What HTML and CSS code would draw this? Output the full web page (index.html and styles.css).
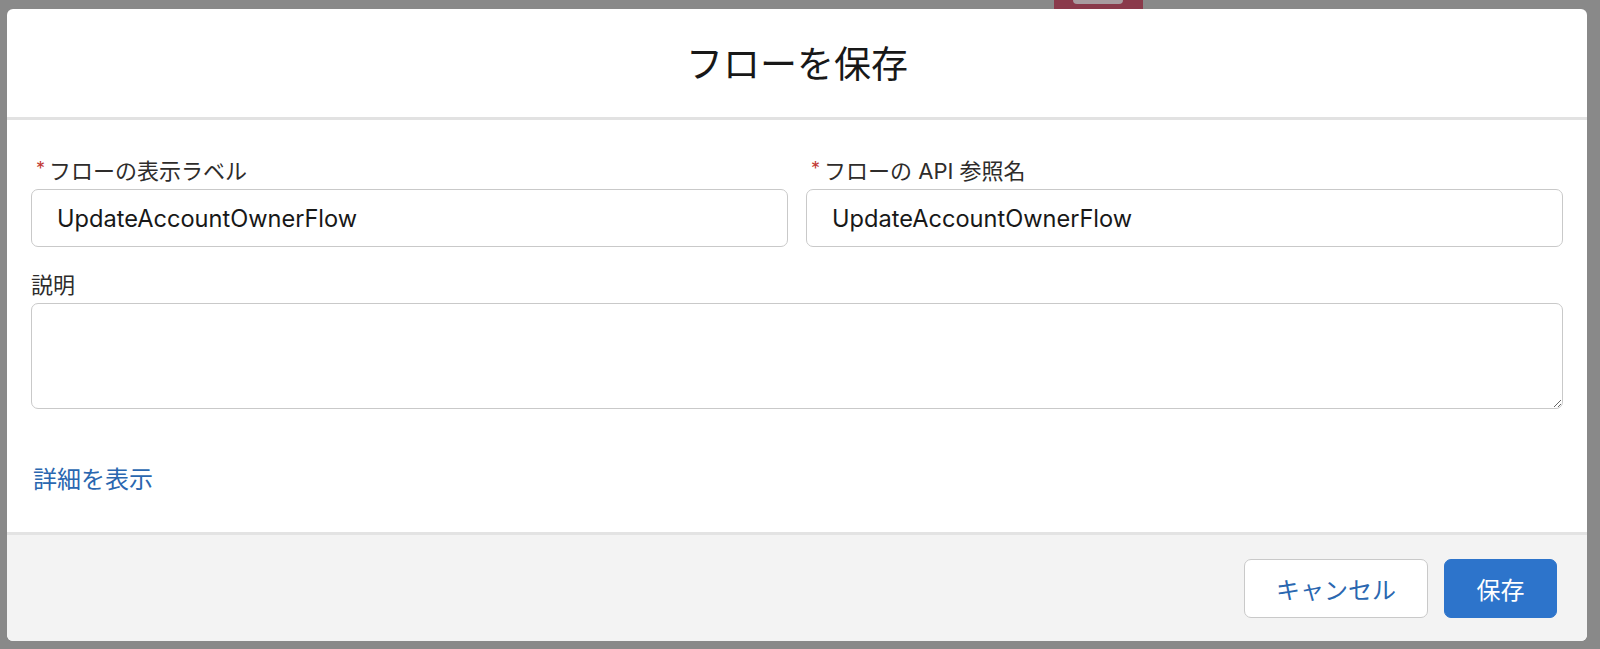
FILE: index.html
```html
<!DOCTYPE html>
<html lang="ja">
<head>
    <meta charset="UTF-8">
    <meta name="viewport" content="width=device-width, initial-scale=1.0">
    <title>フローを保存</title>
    <link rel="stylesheet" href="styles.css">
</head>
<body>
    <div class="backdrop-tab"><span></span></div>

    <div class="modal">
        <header class="modal-header">
            <h1 class="modal-title">フローを保存</h1>
        </header>

        <section class="modal-body">
            <div class="form-row">
                <div class="form-item">
                    <label class="form-label"><abbr class="required">*</abbr>フローの表示ラベル</label>
                    <input class="form-input" type="text" value="UpdateAccountOwnerFlow">
                </div>
                <div class="form-item">
                    <label class="form-label"><abbr class="required">*</abbr>フローの API 参照名</label>
                    <input class="form-input" type="text" value="UpdateAccountOwnerFlow">
                </div>
            </div>

            <div class="form-item">
                <label class="form-label">説明</label>
                <textarea class="form-textarea"></textarea>
            </div>

            <a class="details-link" href="#">詳細を表示</a>
        </section>

        <footer class="modal-footer">
            <button class="btn btn-neutral">キャンセル</button>
            <button class="btn btn-brand">保存</button>
        </footer>
    </div>
</body>
</html>
```

FILE: styles.css
```css
/* Reset and Base Styles */
* {
    margin: 0;
    padding: 0;
    box-sizing: border-box;
    font-family: 'Inter', 'Noto Sans CJK JP', sans-serif;
}

body {
    background-color: #898989;
    color: #181818;
    height: 649px;
    overflow: hidden;
    position: relative;
}

/* Something peeking out behind the overlay */
.backdrop-tab {
    position: absolute;
    top: 0;
    left: 1054px;
    width: 89px;
    height: 9px;
    background-color: #8a3a4b;
}

.backdrop-tab span {
    position: absolute;
    top: 0;
    left: 19px;
    width: 50px;
    height: 4px;
    background-color: #a89ca0;
    border-radius: 0 0 4px 4px;
}

/* Modal */
.modal {
    position: relative;
    margin: 9px 0 0 7px;
    width: 1580px;
    height: 632px;
    background-color: white;
    border-radius: 6px;
    overflow: hidden;
    display: flex;
    flex-direction: column;
}

.modal-header {
    height: 111px;
    display: flex;
    align-items: center;
    justify-content: center;
    border-bottom: 3px solid #e2e2e2;
    padding-bottom: 2px;
}

.modal-title {
    font-size: 37px;
    font-weight: normal;
    color: #181818;
}

/* Body */
.modal-body {
    flex: 1;
    padding: 34px 24px 0 24px;
}

.form-row {
    display: flex;
    gap: 18px;
}

.form-row .form-item {
    flex: 1;
}

.form-item {
    margin-bottom: 21px;
}

.form-label {
    display: flex;
    align-items: center;
    height: 30px;
    margin-bottom: 5px;
    font-size: 22px;
    color: #2e2c2b;
}

.required {
    text-decoration: none;
    color: #c23934;
    font-size: 18px;
    margin: 0 4px 0 5px;
    position: relative;
    top: -1px;
}

.form-input {
    display: block;
    width: 100%;
    height: 58px;
    border: 1.5px solid #c9c9c9;
    border-radius: 7px;
    padding: 0 20px 0 25px;
    font-size: 23.6px;
    color: #181818;
    background-color: white;
    outline: none;
}

.form-textarea {
    display: block;
    width: 100%;
    height: 106px;
    border: 1.5px solid #c9c9c9;
    border-radius: 7px;
    padding: 12px 25px;
    font-size: 24px;
    resize: vertical;
    outline: none;
}

.details-link {
    display: inline-block;
    margin-top: 34px;
    margin-left: 2px;
    font-size: 24px;
    line-height: 32px;
    color: #2a67b0;
    text-decoration: none;
}

/* Footer */
.modal-footer {
    height: 109px;
    background-color: #f3f3f3;
    border-top: 3px solid #e3e3e3;
    display: flex;
    justify-content: flex-end;
    align-items: center;
    gap: 16px;
    padding: 0 30px 0 0;
}

.btn {
    height: 59px;
    border-radius: 7px;
    font-size: 24px;
    cursor: pointer;
}

.btn-neutral {
    width: 184px;
    background-color: white;
    border: 1.5px solid #c9c9c9;
    color: #2a67b0;
}

.btn-brand {
    width: 113px;
    background-color: #2d74cb;
    border: 1px solid #2d74cb;
    color: white;
}
```
